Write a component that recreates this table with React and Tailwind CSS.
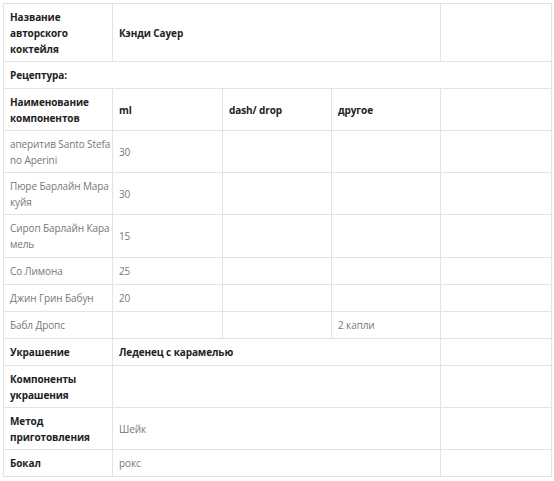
import React from "react";

const B = ({ children }) => (
  <span className="font-bold text-[#222]">{children}</span>
);

const td = "border border-[#e2e2e2] px-[6px] py-0 align-middle whitespace-nowrap overflow-hidden";

export default function App() {
  const ingredients = [
    [<>аперитив Santo Stefa<br />no Aperini</>, "30", "", "", "h-[42px]"],
    [<>Пюре Барлайн Мара<br />куйя</>, "30", "", "", "h-[42px]"],
    [<>Сироп Барлайн Кара<br />мель</>, "15", "", "", "h-[43px]"],
    ["Со Лимона", "25", "", "", "h-[27px]"],
    ["Джин Грин Бабун", "20", "", "", "h-[27px]"],
    ["Бабл Дропс", "", "", "2 капли", "h-[27px]"],
  ];
  return (
    <div className="w-[554px] h-[481px] bg-white pt-[3px] pl-[3px]" style={{ fontFamily: '"Open Sans", sans-serif' }}>
      <table className="w-[548px] table-fixed border-collapse text-[10px] leading-[16px] text-[#777] tracking-[-0.1px]">
        <colgroup>
          <col className="w-[109px]" />
          <col className="w-[110px]" />
          <col className="w-[109px]" />
          <col className="w-[109px]" />
          <col className="w-[111px]" />
        </colgroup>
        <tbody>
          <tr className="h-[58px]">
            <td className={td}><B>Название<br />авторского<br />коктейля</B></td>
            <td className={td} colSpan={3}><B>Кэнди Сауер</B></td>
            <td className={td}></td>
          </tr>
          <tr className="h-[27px]">
            <td className={td} colSpan={5}><B>Рецептура:</B></td>
          </tr>
          <tr className="h-[42px]">
            <td className={td}><B>Наименование<br />компонентов</B></td>
            <td className={td}><B>ml</B></td>
            <td className={td}><B>dash/ drop</B></td>
            <td className={td}><B>другое</B></td>
            <td className={td}></td>
          </tr>
          {ingredients.map((r, i) => (
            <tr key={i} className={r[4]}>
              <td className={td}>{r[0]}</td>
              <td className={td}>{r[1]}</td>
              <td className={td}>{r[2]}</td>
              <td className={td}>{r[3]}</td>
              <td className={td}></td>
            </tr>
          ))}
          <tr className="h-[27px]">
            <td className={td}><B>Украшение</B></td>
            <td className={td} colSpan={3}><B>Леденец с карамелью</B></td>
            <td className={td}></td>
          </tr>
          <tr className="h-[42px]">
            <td className={td}><B>Компоненты<br />украшения</B></td>
            <td className={td} colSpan={3}></td>
            <td className={td}></td>
          </tr>
          <tr className="h-[42px]">
            <td className={td}><B>Метод<br />приготовления</B></td>
            <td className={td} colSpan={3}>Шейк</td>
            <td className={td}></td>
          </tr>
          <tr className="h-[27px]">
            <td className={td}><B>Бокал</B></td>
            <td className={td} colSpan={3}>рокс</td>
            <td className={td}></td>
          </tr>
        </tbody>
      </table>
    </div>
  );
}
